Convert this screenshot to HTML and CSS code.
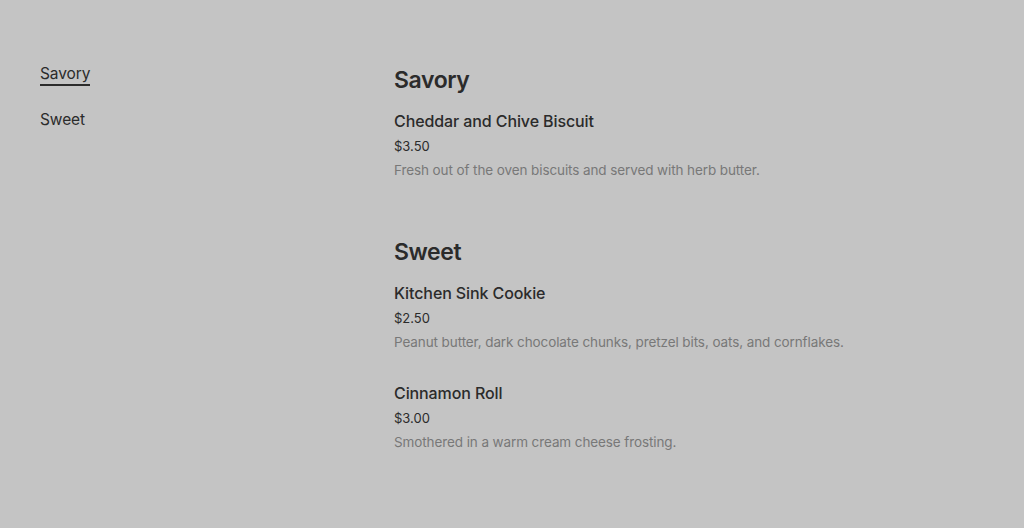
FILE: index.html
```html
<!DOCTYPE html>
<html>
<head>
<meta charset="utf-8">
<link rel="stylesheet" href="styles.css">
</head>
<body>
<div class="page">
  <nav class="nav">
    <a class="nav-link active" href="#savory">Savory</a>
    <a class="nav-link" href="#sweet">Sweet</a>
  </nav>
  <main class="menu">
    <section class="section" id="savory">
      <h2 class="section-title">Savory</h2>
      <div class="item">
        <h3 class="item-name">Cheddar and Chive Biscuit</h3>
        <div class="item-price">$3.50</div>
        <p class="item-desc">Fresh out of the oven biscuits and served with herb butter.</p>
      </div>
    </section>
    <section class="section" id="sweet">
      <h2 class="section-title">Sweet</h2>
      <div class="item">
        <h3 class="item-name">Kitchen Sink Cookie</h3>
        <div class="item-price">$2.50</div>
        <p class="item-desc">Peanut butter, dark chocolate chunks, pretzel bits, oats, and cornflakes.</p>
      </div>
      <div class="item">
        <h3 class="item-name">Cinnamon Roll</h3>
        <div class="item-price">$3.00</div>
        <p class="item-desc">Smothered in a warm cream cheese frosting.</p>
      </div>
    </section>
  </main>
</div>
</body>
</html>
```

FILE: styles.css
```css
* { box-sizing: border-box; }
html, body { margin: 0; padding: 0; }
body {
  background: #c4c4c4;
  color: #2b2b2b;
  font-family: "Inter", "Roboto", sans-serif;
}
.page {
  display: grid;
  grid-template-columns: 354px 1fr;
  padding: 64px 40px 40px;
}
.nav {
  display: flex;
  flex-direction: column;
  align-items: flex-start;
  gap: 24px;
}
.nav-link {
  color: #2b2b2b;
  text-decoration: none;
  font-size: 15.5px;
  line-height: 20px;
  letter-spacing: -0.1px;
  padding-bottom: 0;
  border-bottom: 2px solid transparent;
}
.nav-link.active { border-bottom-color: #2b2b2b; }
.menu {
  display: flex;
  flex-direction: column;
  gap: 54px;
}
.section {
  display: flex;
  flex-direction: column;
}
.section-title {
  margin: 0 0 13px;
  font-size: 23px;
  line-height: 32px;
  font-weight: 600;
  letter-spacing: -0.4px;
}
.item { display: flex; flex-direction: column; margin-bottom: 27px; }
.item:last-child { margin-bottom: 0; }
.item-name {
  margin: 0;
  font-size: 16px;
  line-height: 24px;
  font-weight: 500;
  letter-spacing: -0.1px;
}
.item-price {
  margin-top: 1px;
  font-size: 13px;
  line-height: 24px;
}
.item-desc {
  margin: 0;
  font-size: 13.5px;
  line-height: 24px;
  letter-spacing: -0.1px;
  color: #787878;
}
```
